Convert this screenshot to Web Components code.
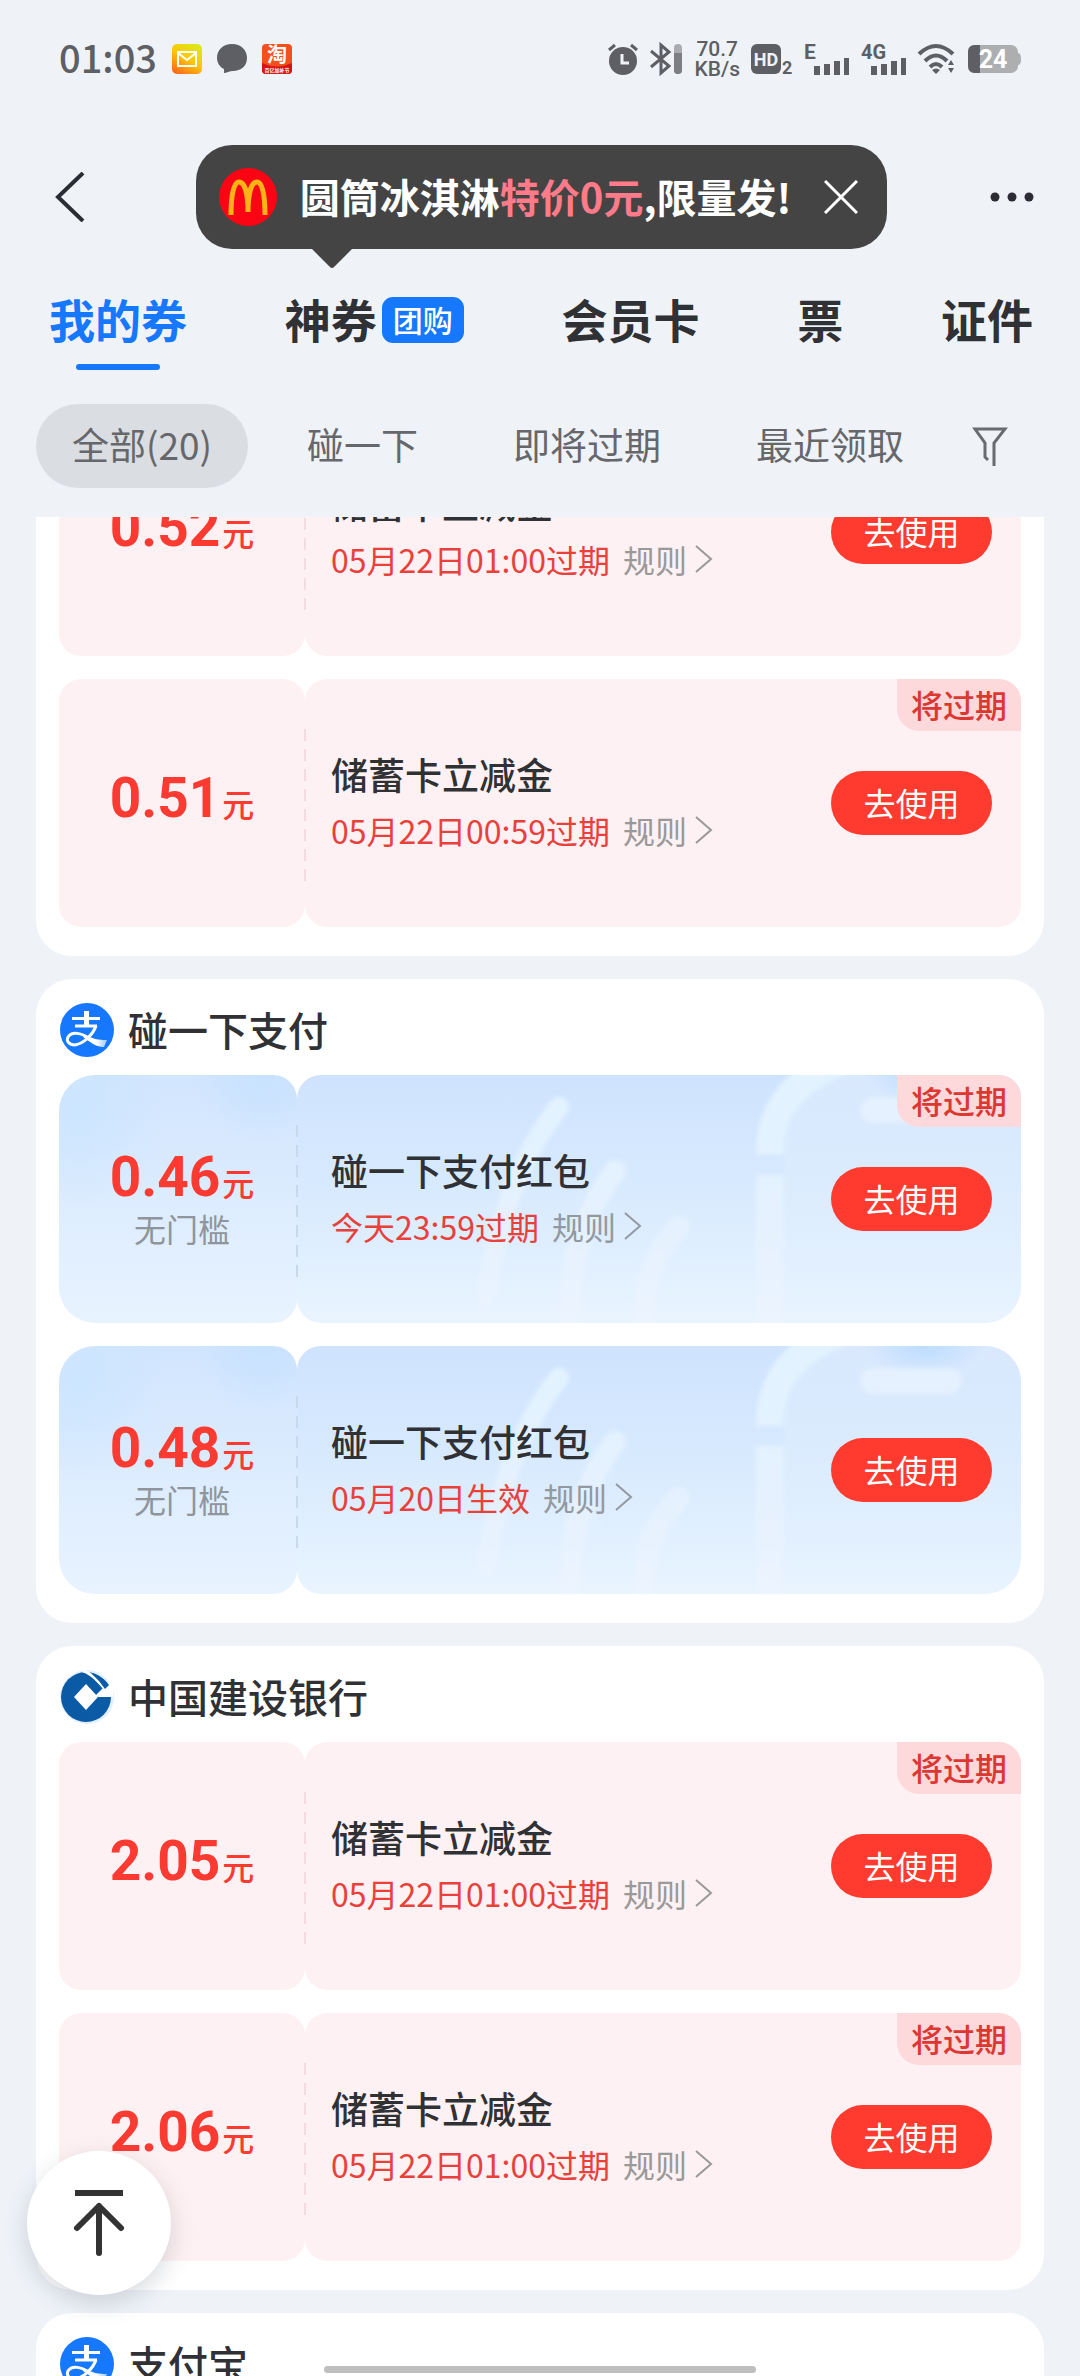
<!DOCTYPE html>
<html lang="zh-CN">
<head>
<meta charset="UTF-8">
<meta name="viewport" content="width=device-width, initial-scale=1">
<title>我的券</title>
<style>
    html, body {
        margin: 0;
        height: 100%;
    }
    body {
        background: #eff3f8;
        color: #303135;
        font-family: "Noto Sans CJK SC", "Noto Sans", sans-serif;
        font-size: 32px;
        overflow: hidden;
    }
</style>
</head>
<body>

<coupon-app>
    <status-bar slot="top"></status-bar>
    <title-bar slot="top">圆筒冰淇淋<em>特价0元</em>,限量发!</title-bar>
    <tab-bar slot="top">
        <tab-item active>我的券</tab-item>
        <tab-item badge="团购">神券</tab-item>
        <tab-item>会员卡</tab-item>
        <tab-item>票</tab-item>
        <tab-item>证件</tab-item>
    </tab-bar>
    <filter-bar slot="top">
        <filter-chip active>全部(20)</filter-chip>
        <filter-chip>碰一下</filter-chip>
        <filter-chip>即将过期</filter-chip>
        <filter-chip>最近领取</filter-chip>
    </filter-bar>

    <coupon-group>
        <coupon-card amount="0.52" name="储蓄卡立减金" date="05月22日01:00过期"></coupon-card>
        <coupon-card amount="0.51" name="储蓄卡立减金" date="05月22日00:59过期" expiring></coupon-card>
    </coupon-group>
    <coupon-group heading="碰一下支付" logo="alipay">
        <coupon-card kind="blue" amount="0.46" limit="无门槛" name="碰一下支付红包" date="今天23:59过期" expiring></coupon-card>
        <coupon-card kind="blue" amount="0.48" limit="无门槛" name="碰一下支付红包" date="05月20日生效"></coupon-card>
    </coupon-group>
    <coupon-group heading="中国建设银行" logo="ccb">
        <coupon-card amount="2.05" name="储蓄卡立减金" date="05月22日01:00过期" expiring></coupon-card>
        <coupon-card amount="2.06" name="储蓄卡立减金" date="05月22日01:00过期" expiring></coupon-card>
    </coupon-group>
    <coupon-group heading="支付宝" logo="alipay"></coupon-group>
</coupon-app>

<script>
const LOGOS = {
    alipay: `
        <svg width="56" height="56" viewBox="0 0 56 56" aria-hidden="true">
            <defs>
                <linearGradient id="tail" x1="0" x2="1" y1="0" y2="0">
                    <stop offset=".55" stop-color="#fff"/>
                    <stop offset="1" stop-color="#9cc8ff"/>
                </linearGradient>
            </defs>
            <circle cx="28" cy="28" r="27" fill="#1677ff"/>
            <path d="M13 15H41V18H13z" fill="#fff"/>
            <path d="M25 9H30V25H25z" fill="#fff"/>
            <path d="M16 24H38" stroke="#fff" stroke-width="3"/>
            <path d="M37 24C34 32 26 41 16 43C10 43 7 39 9 35C13 29 22 31 30 36" fill="none" stroke="#fff" stroke-width="3"/>
            <path d="M24 32C33 37 40 38 48 38L45 45C37 45 31 40 24 35z" fill="url(#tail)"/>
        </svg>`,
    ccb: `
        <svg width="56" height="56" viewBox="0 0 56 56" aria-hidden="true">
            <circle cx="28" cy="28" r="27" fill="#e3f0fc"/>
            <circle cx="27" cy="28" r="25" fill="#0a5aa6"/>
            <path d="M27 15L39 28L27 41L15 28z" fill="#fff"/>
            <path d="M24 2C32 4 39 12 46 20" fill="none" stroke="#fff" stroke-width="3"/>
            <path d="M36 27L54 9V28H40z" fill="#fff"/>
            <path d="M36 5Q45 9 50 16L46 20Q40 11 32 4z" fill="#0a5aa6"/>
        </svg>`
};

class StatusBar extends HTMLElement {
    constructor() {
        super();
        this.attachShadow({ mode: 'open' });
        this.shadowRoot.innerHTML = `
            <style>
                :host {
                    display: flex;
                    align-items: center;
                    height: 118px;
                    padding: 0 59px;
                    color: #5d5f64;
                    font-weight: 500;
                }
                .time { font-size: 38px; margin-right: 15px; padding-bottom: 6px; }
                .apps, .system { display: flex; align-items: center; gap: 15px; }
                .system { margin-left: auto; gap: 11px; }
                .speed { font: 500 21px/20px Roboto, sans-serif; text-align: center; }
                .speed span { display: block; }
                svg { display: block; fill: currentColor; overflow: visible; }
                svg text { font-family: Roboto, "Noto Sans CJK SC", sans-serif; font-weight: 700; }
            </style>
            <span class="time">01:03</span>
            <div class="apps">
                <svg width="30" height="30" viewBox="0 0 30 30">
                    <defs>
                        <linearGradient id="mail" x1=".8" x2=".2" y1="0" y2="1">
                            <stop offset="0" stop-color="#d9ea17"/>
                            <stop offset=".5" stop-color="#fdc50a"/>
                            <stop offset="1" stop-color="#fb6a18"/>
                        </linearGradient>
                    </defs>
                    <rect width="30" height="30" rx="5" fill="url(#mail)"/>
                    <path d="M6 8H24V22H6z M6 9L15 16L24 9" fill="none" stroke="#fff" stroke-width="2"/>
                </svg>
                <svg width="30" height="30" viewBox="0 0 30 30">
                    <path d="M15 0C24 0 30 6 30 14C30 22 24 27 16 27C13 27 9 29 7 29L7 25C3 23 0 19 0 14C0 6 6 0 15 0z"/>
                </svg>
                <svg width="30" height="30" viewBox="0 0 30 30">
                    <rect width="30" height="30" rx="4" fill="#f4501e"/>
                    <path d="M0 19Q15 26 30 19V26Q30 30 26 30H4Q0 30 0 26z" fill="#d41512"/>
                    <text x="15" y="18" font-size="20" text-anchor="middle" fill="#fff">淘</text>
                    <text x="15" y="28" font-size="5" text-anchor="middle" fill="#fff">百亿加补节</text>
                </svg>
            </div>
            <div class="system">
                <svg width="30" height="32" viewBox="0 0 30 32">
                    <circle cx="15" cy="18" r="14"/>
                    <path d="M1 7L7 2M29 7L23 2" stroke="currentColor" stroke-width="3"/>
                    <path d="M14 11V20H21" fill="none" stroke="#eff3f8" stroke-width="3"/>
                </svg>
                <svg width="34" height="32" viewBox="0 0 34 32">
                    <path d="M2 8L20 23L12 30V2L20 9L2 24" fill="none" stroke="currentColor" stroke-width="3"/>
                    <rect x="25" y="1" width="8" height="30" rx="4" fill="#a9abae"/>
                    <path d="M25 10H33V27Q33 31 29 31Q25 31 25 27z" fill="#7c7e82"/>
                </svg>
                <div class="speed"><span>70.7</span><span>KB/s</span></div>
                <svg width="42" height="32" viewBox="0 0 42 32">
                    <rect y="1" width="30" height="30" rx="6"/>
                    <text x="15" y="23" font-size="18" text-anchor="middle" fill="#eff3f8">HD</text>
                    <text x="31" y="31" font-size="18">2</text>
                </svg>
                <svg width="46" height="32" viewBox="0 0 46 32">
                    <text x="0" y="16" font-size="21">E</text>
                    <path d="M10 23h6v9h-6z M20 21h6v11h-6z M30 18h6v14h-6z M40 15h5v17h-5z"/>
                </svg>
                <svg width="46" height="32" viewBox="0 0 46 32">
                    <text x="0" y="16" font-size="20">4G</text>
                    <path d="M10 23h6v9h-6z M20 21h6v11h-6z M30 18h6v14h-6z M40 15h5v17h-5z"/>
                </svg>
                <svg width="38" height="32" viewBox="0 0 38 32">
                    <path d="M1 11Q18 -5 35 11M7 18Q18 7 29 18M12 24Q18 18 24 24" fill="none" stroke="currentColor" stroke-width="4"/>
                    <path d="M14 27Q18 24 22 27L18 31z M30 22L33 17L36 22z M30 25H36L33 30z"/>
                </svg>
                <svg width="54" height="30" viewBox="0 0 54 30">
                    <rect x="1" y="1" width="50" height="28" rx="7" fill="#adaeaf"/>
                    <path d="M8 1H13V29H8Q1 29 1 22V8Q1 1 8 1z"/>
                    <path d="M51 9Q54 9 54 15Q54 21 51 21z" fill="#adaeaf"/>
                    <text x="26" y="24" font-size="25" text-anchor="middle" fill="#fff">24</text>
                </svg>
            </div>
        `;
    }
}

class TitleBar extends HTMLElement {
    constructor() {
        super();
        this.attachShadow({ mode: 'open' });
        this.shadowRoot.innerHTML = `
            <style>
                :host {
                    display: flex;
                    align-items: center;
                    justify-content: space-between;
                    height: 158px;
                    padding: 0 44px 0 51px;
                }
                button { display: flex; padding: 0; border: 0; background: none; cursor: pointer; }
                svg { display: block; }
                .tip {
                    position: relative;
                    display: flex;
                    align-items: center;
                    height: 104px;
                    padding: 0 29px 0 23px;
                    border-radius: 36px;
                    background: #444;
                    color: #fff;
                    font-size: 40px;
                    font-weight: 700;
                    white-space: nowrap;
                }
                .tip p { margin: 0 33px 0 23px; padding-bottom: 2px; }
                .arrow { position: absolute; left: 114px; top: 103px; }
                ::slotted(em) { color: #ff7b8a; font-style: normal; }
            </style>
            <button aria-label="返回">
                <svg width="42" height="50" viewBox="0 0 42 50">
                    <path d="M32 1L7 25L32 49" fill="none" stroke="#2b2d33" stroke-width="4"/>
                </svg>
            </button>
            <div class="tip">
                <svg width="58" height="60" viewBox="0 0 58 60">
                    <circle cx="29" cy="30" r="29" fill="#fb0414"/>
                    <path d="M12 48C12 27 15 15 20 15C26 15 29 28 29 45C29 28 32 15 38 15C43 15 46 27 46 48" fill="none" stroke="#fcb316" stroke-width="5"/>
                </svg>
                <p><slot></slot></p>
                <button aria-label="关闭">
                    <svg width="34" height="34" viewBox="0 0 34 34">
                        <path d="M1 1L33 33M33 1L1 33" stroke="#fff" stroke-width="3"/>
                    </svg>
                </button>
                <svg class="arrow" width="44" height="22" viewBox="0 0 44 22">
                    <path d="M1 0H43L25 18Q22 22 19 18z" fill="#444"/>
                </svg>
            </div>
            <button aria-label="更多">
                <svg width="46" height="12" viewBox="0 0 46 12" fill="#2b2d33">
                    <circle cx="5" cy="6" r="4.5"/><circle cx="22" cy="6" r="4.5"/><circle cx="39" cy="6" r="4.5"/>
                </svg>
            </button>
        `;
    }
}

class TabBar extends HTMLElement {
    constructor() {
        super();
        this.attachShadow({ mode: 'open' });
        this.shadowRoot.innerHTML = `
            <style>
                :host { display: block; }
                nav {
                    display: flex;
                    justify-content: space-between;
                    height: 94px;
                    padding: 0 47px 0 49px;
                }
            </style>
            <nav><slot></slot></nav>
        `;
    }
}

class TabItem extends HTMLElement {
    constructor() {
        super();
        this.attachShadow({ mode: 'open' });
    }

    connectedCallback() {
        const badge = this.getAttribute('badge');
        this.shadowRoot.innerHTML = `
            <style>
                :host { display: block; }
                button {
                    display: grid;
                    grid-template-columns: auto auto;
                    grid-template-rows: 88px 6px;
                    align-items: center;
                    justify-items: center;
                    padding: 0;
                    border: 0;
                    background: none;
                    color: inherit;
                    font: 700 46px/60px "Noto Sans CJK SC", sans-serif;
                    white-space: nowrap;
                }
                .label { padding-bottom: 5px; }
                :host([active]) button { color: #1677ff; }
                :host([active]) button::after {
                    content: "";
                    width: 84px;
                    height: 6px;
                    border-radius: 3px;
                    background: #1677ff;
                    grid-row: 2;
                    grid-column: 1;
                }
                .badge {
                    margin-left: 5px;
                    padding: 0 11px 2px;
                    border-radius: 11px;
                    background: #1677ff;
                    color: #fff;
                    font-size: 30px;
                    font-weight: 500;
                    line-height: 44px;
                }
            </style>
            <button><span class="label"><slot></slot></span>${badge ? `<span class="badge">${badge}</span>` : ''}</button>
        `;
    }
}

class FilterBar extends HTMLElement {
    constructor() {
        super();
        this.attachShadow({ mode: 'open' });
        this.shadowRoot.innerHTML = `
            <style>
                :host {
                    display: flex;
                    align-items: center;
                    gap: 23px;
                    padding: 34px 72px 29px 36px;
                }
                button { display: flex; margin-left: auto; padding: 0; border: 0; background: none; }
            </style>
            <slot></slot>
            <button aria-label="筛选">
                <svg width="36" height="42" viewBox="0 0 36 42">
                    <path d="M16 35L13 32V18L3 4H33L22 18V41" fill="none" stroke="#6a6b6e" stroke-width="3"/>
                </svg>
            </button>
        `;
    }
}

class FilterChip extends HTMLElement {
    constructor() {
        super();
        this.attachShadow({ mode: 'open' });
        this.shadowRoot.innerHTML = `
            <style>
                :host { display: block; }
                button {
                    display: block;
                    padding: 0 36px 4px;
                    border: 0;
                    border-radius: 42px;
                    background: none;
                    color: #66676a;
                    font: 400 37px/80px "Noto Sans CJK SC", sans-serif;
                    white-space: nowrap;
                }
                :host([active]) button { background: #dadde2; }
            </style>
            <button><slot></slot></button>
        `;
    }
}

class CouponGroup extends HTMLElement {
    constructor() {
        super();
        this.attachShadow({ mode: 'open' });
    }

    connectedCallback() {
        const heading = this.getAttribute('heading');
        const logo = LOGOS[this.getAttribute('logo')] || '';
        this.shadowRoot.innerHTML = `
            <style>
                :host {
                    display: block;
                    padding: 0 23px 29px;
                    border-radius: 36px;
                    background: #fff;
                }
                header {
                    display: flex;
                    align-items: center;
                    gap: 13px;
                    height: 56px;
                    padding: 23px 0 17px;
                }
                h2 { margin: 0; padding-bottom: 3px; font-size: 40px; font-weight: 500; line-height: 56px; }
                .coupons { display: grid; gap: 23px; }
                svg { display: block; }
            </style>
            ${heading ? `<header>${logo}<h2>${heading}</h2></header>` : ''}
            <div class="coupons"><slot></slot></div>
        `;
    }
}

class CouponCard extends HTMLElement {
    constructor() {
        super();
        this.attachShadow({ mode: 'open' });
    }

    connectedCallback() {
        const get = (name) => this.getAttribute(name);
        const limit = get('limit');
        this.shadowRoot.innerHTML = `
            <style>
                :host {
                    display: flex;
                    height: 248px;
                }
                .stub, .body {
                    position: relative;
                    box-sizing: border-box;
                    display: flex;
                    border-radius: 22px;
                    background: #fef1f3;
                }
                .stub {
                    flex: none;
                    flex-direction: column;
                    align-items: center;
                    justify-content: center;
                    width: 246px;
                    padding-bottom: 6px;
                }
                .body {
                    flex: 1;
                    align-items: center;
                    justify-content: space-between;
                    padding: 0 29px 0 26px;
                }
                /* dashed tear line between the two halves */
                .body::before {
                    content: "";
                    position: absolute;
                    left: -1px;
                    top: 50px;
                    bottom: 43px;
                    width: 2px;
                    background: repeating-linear-gradient(#f3dcdf 0 12px, transparent 12px 20px);
                }
                .amount {
                    color: #fb3a31;
                    font: 700 55px/58px Roboto, sans-serif;
                    white-space: nowrap;
                }
                .amount span {
                    font: 500 32px/58px "Noto Sans CJK SC", sans-serif;
                    margin-left: 2px;
                }
                .limit { color: #8f959c; line-height: 34px; }
                h3 { margin: 0; font-size: 37px; font-weight: 500; line-height: 56px; }
                .text { position: relative; padding-bottom: 3px; }
                .line { display: flex; align-items: center; gap: 13px; line-height: 56px; }
                time { color: #e8413c; }
                a {
                    display: flex;
                    align-items: center;
                    gap: 8px;
                    color: #999;
                    text-decoration: none;
                }
                button {
                    position: relative;
                    width: 161px;
                    height: 64px;
                    padding: 0 0 2px;
                    border: 0;
                    border-radius: 32px;
                    background: #ff3b30;
                    color: #fff;
                    font: 400 32px/62px "Noto Sans CJK SC", sans-serif;
                }
                .badge {
                    position: absolute;
                    top: 0;
                    right: 0;
                    padding: 0 14px 2px;
                    border-radius: 0 22px;
                    background: #fdd9dc;
                    color: #dc3833;
                    font-weight: 500;
                    line-height: 50px;
                }
                .art { display: none; }

                :host([kind="blue"]) .stub {
                    width: 238px;
                    padding-left: 8px;
                    border-radius: 36px 24px 24px 36px;
                    background:
                        radial-gradient(circle at 205px 0, rgba(195, 224, 255, .7), transparent 70px),
                        radial-gradient(circle at 20px 40px, rgba(201, 229, 255, .7), transparent 90px),
                        linear-gradient(#d1e5fe, #e8f3ff);
                }
                :host([kind="blue"]) .body {
                    padding-left: 34px;
                    border-radius: 24px 36px 36px 24px;
                    background: linear-gradient(#cfe3fe, #d6e9fe 40%, #e9f4ff);
                }
                :host([kind="blue"][expiring]) .body { border-top-right-radius: 22px; }
                :host([kind="blue"]) .body::before {
                    background: repeating-linear-gradient(#c9d9ec 0 12px, transparent 12px 20px);
                }
                :host([kind="blue"]) .art {
                    display: block;
                    position: absolute;
                    inset: 0;
                    width: 100%;
                    height: 100%;
                    border-radius: inherit;
                }
                :host([kind="blue"]) a { color: #9299a1; }
            </style>
            <div class="stub">
                <div class="amount">${get('amount')}<span>元</span></div>
                ${limit ? `<div class="limit">${limit}</div>` : ''}
            </div>
            <div class="body">
                <svg class="art" viewBox="0 0 724 248" preserveAspectRatio="xMaxYMid slice" aria-hidden="true">
                    <defs>
                        <linearGradient id="fade" gradientUnits="userSpaceOnUse" x1="0" x2="0" y1="0" y2="248">
                            <stop offset="0" stop-color="#e2f3ff"/>
                            <stop offset=".6" stop-color="#e5f1fe"/>
                            <stop offset="1" stop-color="#ebf4ff"/>
                        </linearGradient>
                        <linearGradient id="screen" x1="0" x2="0" y1="0" y2="1">
                            <stop offset="0" stop-color="#dceafd" stop-opacity=".8"/>
                            <stop offset="1" stop-color="#e8f3ff" stop-opacity="0"/>
                        </linearGradient>
                        <radialGradient id="glow">
                            <stop offset="0" stop-color="#bcdcff"/>
                            <stop offset="1" stop-color="#bcdcff" stop-opacity="0"/>
                        </radialGradient>
                        <filter id="soft"><feGaussianBlur stdDeviation="2"/></filter>
                    </defs>
                    <path d="M488 248V78Q488 20 545 0H724V248z" fill="url(#screen)"/>
                    <ellipse cx="628" cy="0" rx="60" ry="30" fill="url(#glow)"/>
                    <g fill="none" stroke="url(#fade)" stroke-width="28" filter="url(#soft)">
                        <path d="M473 80C473 35 495 4 550 -16"/>
                        <path d="M473 100V260"/>
                        <path d="M262 32C228 75 202 136 190 220" stroke-width="20" stroke-linecap="round"/>
                        <path d="M318 96C292 130 275 170 272 250" stroke-width="22" stroke-linecap="round"/>
                        <path d="M382 152C356 180 347 205 347 250" stroke-width="22" stroke-linecap="round"/>
                        <path d="M576 35H652" stroke="#e5f1fe" stroke-width="25" stroke-linecap="round"/>
                    </g>
                </svg>
                <div class="text">
                    <h3>${get('name')}</h3>
                    <div class="line">
                        <time>${get('date')}</time>
                        <a href="#rules">规则
                            <svg width="18" height="28" viewBox="0 0 18 28" fill="none" stroke="currentColor" stroke-width="2">
                                <path d="M1 1L16 14L1 27"/>
                            </svg>
                        </a>
                    </div>
                </div>
                <button>去使用</button>
                ${this.hasAttribute('expiring') ? '<span class="badge">将过期</span>' : ''}
            </div>
        `;
    }
}

class CouponApp extends HTMLElement {
    constructor() {
        super();
        this.attachShadow({ mode: 'open' });
        this.shadowRoot.innerHTML = `
            <style>
                :host {
                    display: flex;
                    flex-direction: column;
                    height: 100vh;
                }
                main {
                    flex: 1;
                    min-height: 0;
                    display: flex;
                    flex-direction: column;
                    gap: 23px;
                    padding: 0 36px 23px;
                    overflow-y: auto;
                    scrollbar-width: none;
                }
                .to-top {
                    position: fixed;
                    left: 27px;
                    bottom: 81px;
                    display: grid;
                    place-items: center;
                    width: 144px;
                    height: 144px;
                    padding: 0;
                    border: 0;
                    border-radius: 50%;
                    background: #fff;
                    box-shadow: 0 8px 24px rgba(60, 70, 90, .2);
                }
                .home-bar {
                    position: fixed;
                    left: 30%;
                    right: 30%;
                    bottom: 3px;
                    height: 7px;
                    border-radius: 4px;
                    background: #bfbfbf;
                }
            </style>
            <slot name="top"></slot>
            <main><slot></slot></main>
            <button class="to-top" aria-label="回到顶部">
                <svg width="54" height="68" viewBox="0 0 54 68" fill="none" stroke="#333" stroke-width="6">
                    <path d="M3 4H51"/>
                    <path d="M27 64V17M5 39L27 17L49 39" stroke-linecap="round" stroke-linejoin="round"/>
                </svg>
            </button>
            <div class="home-bar"></div>
        `;
        this.list = this.shadowRoot.querySelector('main');
        this.shadowRoot.querySelector('.to-top').addEventListener('click', () => {
            this.list.scrollTo({ top: 0, behavior: 'smooth' });
        });
    }
}

customElements.define('status-bar', StatusBar);
customElements.define('title-bar', TitleBar);
customElements.define('tab-bar', TabBar);
customElements.define('tab-item', TabItem);
customElements.define('filter-bar', FilterBar);
customElements.define('filter-chip', FilterChip);
customElements.define('coupon-group', CouponGroup);
customElements.define('coupon-card', CouponCard);
customElements.define('coupon-app', CouponApp);

// reopen the list part-way down the first group
document.querySelector('coupon-app').list.scrollTop = 109;
</script>
</body>
</html>
